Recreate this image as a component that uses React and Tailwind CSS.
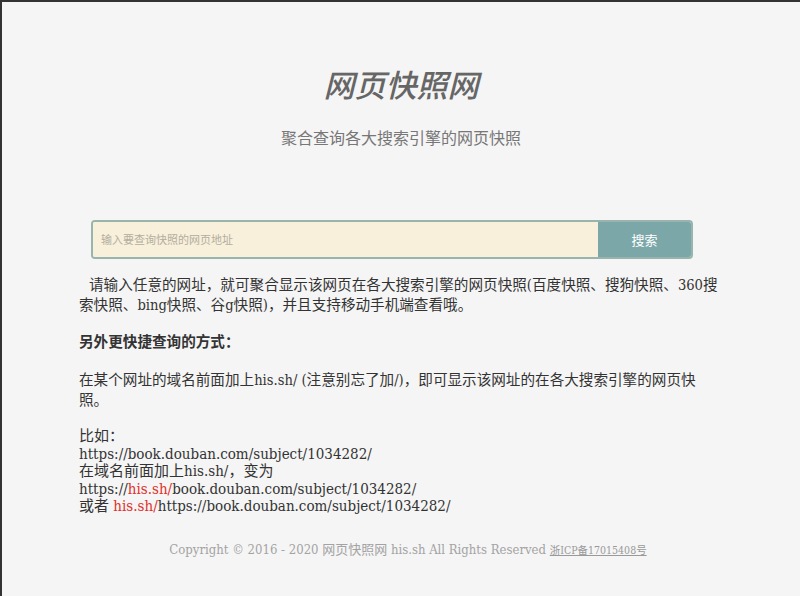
import React from 'react';

const serif = { fontFamily: '"DejaVu Serif Condensed", "Liberation Serif", "Noto Sans CJK SC", serif' };

export default function App() {
    return (
        <div className="min-h-[596px] bg-[#f5f5f5] border-t-2 border-l-2 border-[#333] text-[#333]" style={{ fontFamily: '"Noto Sans CJK SC", sans-serif' }}>
            <div className="w-[644px] mx-auto">
                <h1 className="mt-[62px] text-center text-[31px] leading-[40px] italic font-medium text-[#666]">网页快照网</h1>
                <p className="mt-[21px] text-center text-[16px] leading-[24px] text-[#777]">聚合查询各大搜索引擎的网页快照</p>

                <div className="mt-[71px] ml-[12px] w-[602px] h-[39px] flex border-2 border-[#98b4ad] rounded-[4px] overflow-hidden">
                    <input
                        className="flex-1 bg-[#f8f0da] px-[8px] text-[11px] text-[#555] placeholder:text-[#b3ada0] outline-none"
                        placeholder="输入要查询快照的网页地址"
                    />
                    <button className="w-[93px] bg-[#7ba7a9] text-white text-[13px]">搜索</button>
                </div>

                <div className="text-[14.6px]" style={serif}>
                    <p className="mt-[16px] leading-[20px] indent-[10px]">
                        请输入任意的网址，就可聚合显示该网页在各大搜索引擎的网页快照(百度快照、搜狗快照、360搜索快照、bing快照、谷g快照)，并且支持移动手机端查看哦。
                    </p>
                    <p className="mt-[17px] leading-[20px] font-semibold">另外更快捷查询的方式：</p>
                    <p className="mt-[18px] leading-[20px]">
                        在某个网址的域名前面加上his.sh/ (注意别忘了加/)，即可显示该网址的在各大搜索引擎的网页快照。
                    </p>
                    <p className="mt-[18px] leading-[17.5px] text-[15px]">
                        比如：<br />
                        https://book.douban.com/subject/1034282/<br />
                        在域名前面加上his.sh/，变为<br />
                        https://<span className="text-[#e0302a]">his.sh/</span>book.douban.com/subject/1034282/<br />
                        或者 <span className="text-[#e0302a]">his.sh/</span>https://book.douban.com/subject/1034282/
                    </p>
                </div>
            </div>

            <footer className="mt-[24px] pl-[14px] text-center text-[13px] leading-[20px] text-[#a3a3a3]" style={serif}>
                Copyright © 2016 - 2020 网页快照网 his.sh All Rights Reserved{' '}
                <a className="text-[10.5px] underline text-[#999]">浙ICP备17015408号</a>
            </footer>
        </div>
    );
}
